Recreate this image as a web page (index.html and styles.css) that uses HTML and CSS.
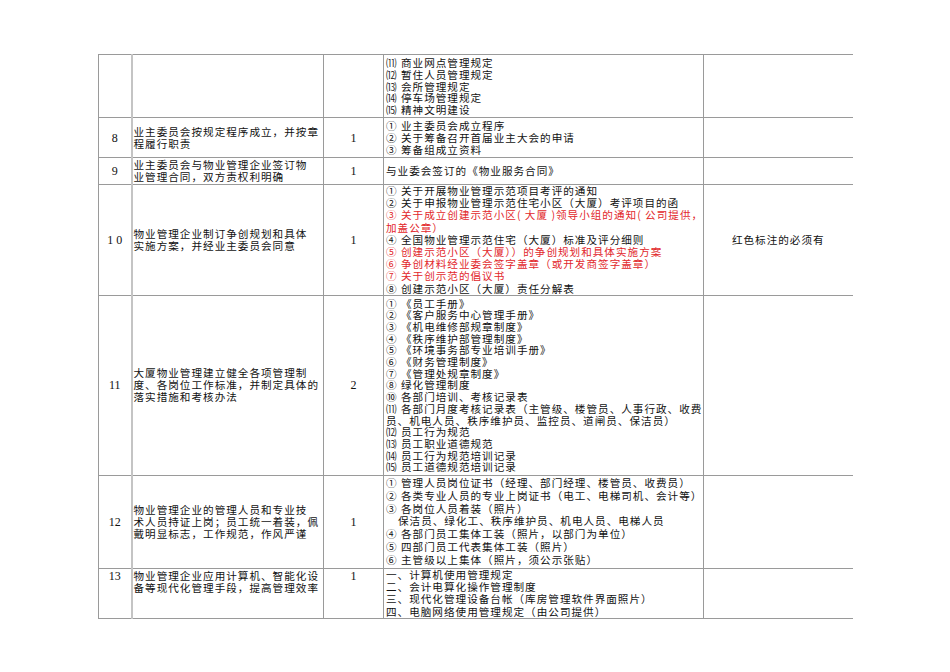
FILE: index.html
```html
<!DOCTYPE html>
<html lang="zh">
<head>
<meta charset="utf-8">
<title>物业管理示范项目考评资料</title>
<link rel="stylesheet" href="styles.css">
</head>
<body>
<table class="sheet">
  <colgroup>
    <col class="c-no"><col class="c-item"><col class="c-score"><col class="c-docs"><col class="c-note">
  </colgroup>
  <tr class="r7">
    <td class="no"></td>
    <td class="item"></td>
    <td class="score"></td>
    <td class="docs">
      <div>⑾ 商业网点管理规定</div>
      <div>⑿ 暂住人员管理规定</div>
      <div>⒀ 会所管理规定</div>
      <div>⒁ 停车场管理规定</div>
      <div>⒂ 精神文明建设</div>
    </td>
    <td class="note"></td>
  </tr>
  <tr class="r8">
    <td class="no">8</td>
    <td class="item">业主委员会按规定程序成立，并按章<br>程履行职责</td>
    <td class="score">1</td>
    <td class="docs">
      <div>① 业主委员会成立程序</div>
      <div>② 关于筹备召开首届业主大会的申请</div>
      <div>③ 筹备组成立资料</div>
    </td>
    <td class="note"></td>
  </tr>
  <tr class="r9">
    <td class="no">9</td>
    <td class="item">业主委员会与物业管理企业签订物<br>业管理合同，双方责权利明确</td>
    <td class="score">1</td>
    <td class="docs">
      <div>与业委会签订的《物业服务合同》</div>
    </td>
    <td class="note"></td>
  </tr>
  <tr class="r10">
    <td class="no">1 0</td>
    <td class="item">物业管理企业制订争创规划和具体<br>实施方案，并经业主委员会同意</td>
    <td class="score">1</td>
    <td class="docs">
      <div>① 关于开展物业管理示范项目考评的通知</div>
      <div>② 关于申报物业管理示范住宅小区（大厦）考评项目的函</div>
      <div class="red">③ 关于成立创建示范小区( 大厦 )领导小组的通知( 公司提供，</div>
      <div class="red">加盖公章）</div>
      <div>④ 全国物业管理示范住宅（大厦）标准及评分细则</div>
      <div class="red">⑤ 创建示范小区（大厦））的争创规划和具体实施方案</div>
      <div class="red">⑥ 争创材料经业委会签字盖章（或开发商签字盖章）</div>
      <div class="red">⑦ 关于创示范的倡议书</div>
      <div>⑧ 创建示范小区（大厦）责任分解表</div>
    </td>
    <td class="note">红色标注的必须有</td>
  </tr>
  <tr class="r11">
    <td class="no">11</td>
    <td class="item">大厦物业管理建立健全各项管理制<br>度、各岗位工作标准，并制定具体的<br>落实措施和考核办法</td>
    <td class="score">2</td>
    <td class="docs">
      <div>① 《员工手册》</div>
      <div>② 《客户服务中心管理手册》</div>
      <div>③ 《机电维修部规章制度》</div>
      <div>④ 《秩序维护部管理制度》</div>
      <div>⑤ 《环境事务部专业培训手册》</div>
      <div>⑥ 《财务管理制度》</div>
      <div>⑦ 《管理处规章制度》</div>
      <div>⑧ 绿化管理制度</div>
      <div>⑩ 各部门培训、考核记录表</div>
      <div>⑾ 各部门月度考核记录表（主管级、楼管员、人事行政、收费</div>
      <div>员、机电人员、秩序维护员、监控员、道闸员、保洁员）</div>
      <div>⑿ 员工行为规范</div>
      <div>⒀ 员工职业道德规范</div>
      <div>⒁ 员工行为规范培训记录</div>
      <div>⒂ 员工道德规范培训记录</div>
    </td>
    <td class="note"></td>
  </tr>
  <tr class="r12">
    <td class="no">12</td>
    <td class="item">物业管理企业的管理人员和专业技<br>术人员持证上岗；员工统一着装，佩<br>戴明显标志，工作规范，作风严谨</td>
    <td class="score">1</td>
    <td class="docs">
      <div>① 管理人员岗位证书（经理、部门经理、楼管员、收费员）</div>
      <div>② 各类专业人员的专业上岗证书（电工、电梯司机、会计等）</div>
      <div>③ 各岗位人员着装（照片）</div>
      <div class="indent">保洁员、绿化工、秩序维护员、机电人员、电梯人员</div>
      <div>④ 各部门员工集体工装（照片，以部门为单位）</div>
      <div>⑤ 四部门员工代表集体工装（照片）</div>
      <div>⑥ 主管级以上集体（照片，须公示张贴）</div>
    </td>
    <td class="note"></td>
  </tr>
  <tr class="r13">
    <td class="no">13</td>
    <td class="item">物业管理企业应用计算机、智能化设<br>备等现代化管理手段，提高管理效率</td>
    <td class="score">1</td>
    <td class="docs">
      <div>一、计算机使用管理规定</div>
      <div>二、会计电算化操作管理制度</div>
      <div>三、现代化管理设备台帐（库房管理软件界面照片）</div>
      <div>四、电脑网络使用管理规定（由公司提供）</div>
    </td>
    <td class="note"></td>
  </tr>
</table>
</body>
</html>
```

FILE: styles.css
```css
html, body {
  margin: 0;
  padding: 0;
  background: #ffffff;
}

body {
  padding: 54px 0 0 98px;
  font-family: "Liberation Serif", "Noto Sans CJK SC", serif;
  color: #111;
}

.sheet {
  border-collapse: collapse;
  table-layout: fixed;
  width: 754px;
  font-size: 10.6px;
  letter-spacing: 1px;
  line-height: 12px;
}

.c-no { width: 33px; }
.c-item { width: 192px; }
.c-score { width: 60px; }
.c-docs { width: 320px; }
.c-note { width: 149px; }

.sheet td {
  border: 1px solid #9a9a9a;
  padding: 0;
  vertical-align: middle;
  white-space: nowrap;
  overflow: hidden;
}

.sheet td:last-child {
  border-right: none;
}

.sheet td.no {
  border-right: 2px solid #c4c4c4;
  text-align: center;
  font-size: 12px;
  letter-spacing: 0;
}

.sheet td.item {
  padding-left: 1px;
  font-family: "Noto Sans CJK SC", sans-serif;
}

.sheet td.score {
  text-align: center;
  font-size: 12px;
  letter-spacing: 0;
}

.sheet td.docs {
  padding-left: 2px;
  font-family: "Noto Sans CJK SC", sans-serif;
}

.sheet td.note {
  text-align: center;
  font-family: "Noto Sans CJK SC", sans-serif;
}

.red {
  color: #e2272b;
}

.indent {
  padding-left: 12px;
}

.r7 { height: 63px; }
.r7 td { vertical-align: top; }
.r7 .docs { padding-top: 2px; line-height: 11.8px; }

.r8 { height: 40px; }
.r9 { height: 27px; }
.r10 { height: 110px; }
.r10 .docs { line-height: 12.2px; }
.r11 { height: 180px; }
.r11 .docs { line-height: 11.7px; }
.r12 { height: 93px; }
.r12 .docs { line-height: 12.8px; }
.r13 { height: 46px; }
.r13 td { vertical-align: top; padding-top: 1px; }
.r13 .docs { line-height: 12.3px; padding-top: 0; }
```
